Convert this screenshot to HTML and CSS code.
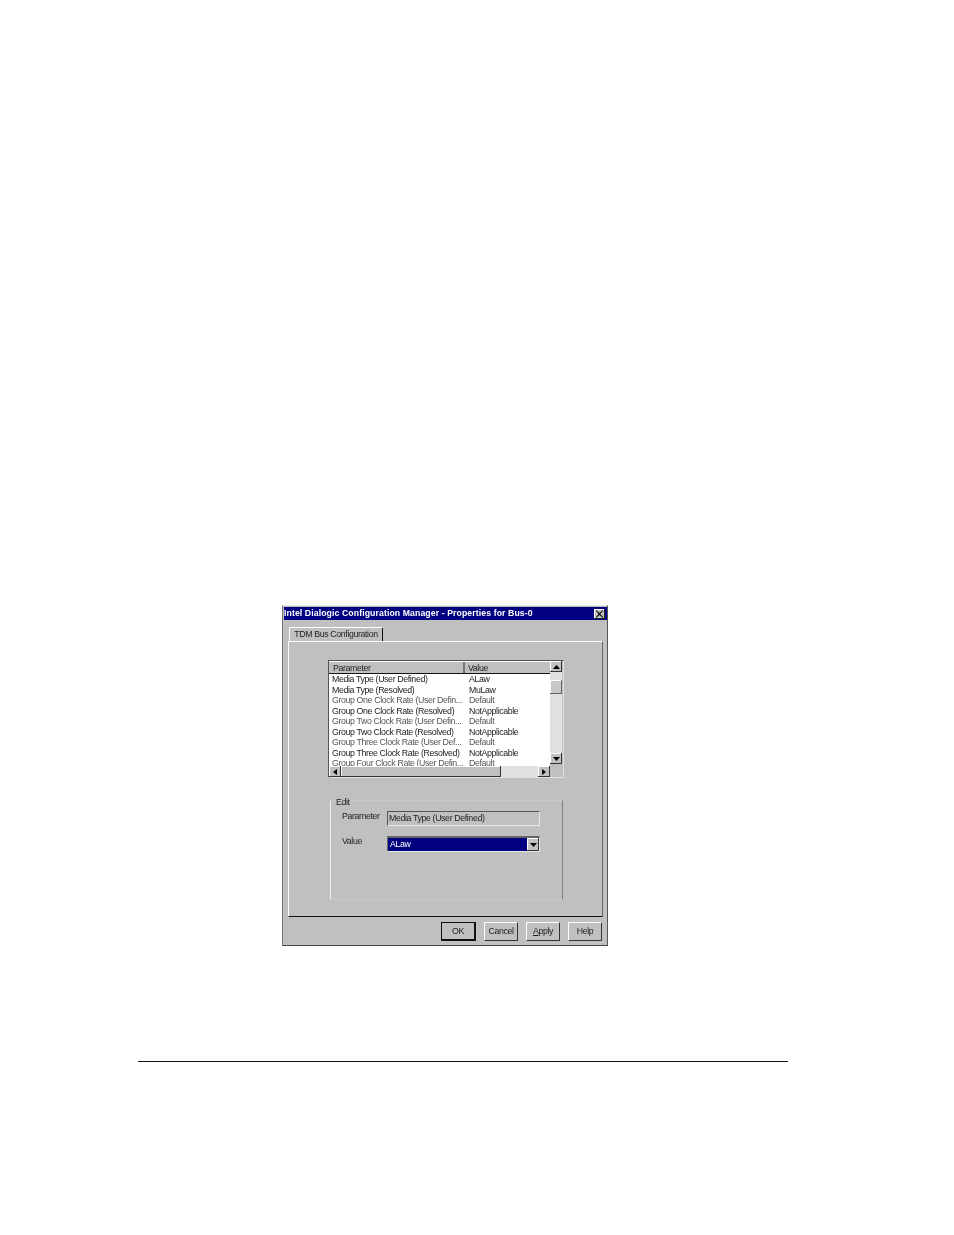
FILE: index.html
```html
<!DOCTYPE html>
<html>
<head>
<meta charset="UTF-8">
<title>Properties for Bus-0</title>
<link rel="stylesheet" href="styles.css">
</head>
<body>
<div class="dialog">
	<div class="titlebar">
		<span class="title">Intel Dialogic Configuration Manager - Properties for Bus-0</span>
		<span class="close">
			<svg width="9" height="8" viewBox="0 0 9 8"><path d="M1 0l3.500 3L8 0v1L5.200 4 8 7v1L4.500 5 1 8V7l2.800-3L1 1z" fill="#000"/></svg>
		</span>
	</div>
	<div class="tabstrip"><div class="tab">TDM Bus Configuration</div></div>
	<div class="panel">
		<div class="listbox">
			<div class="listmain">
				<div class="listhead">
					<div class="col1">Parameter</div>
					<div class="col2">Value</div>
				</div>
				<div class="rows">
					<div class="row"><span class="col1">Media Type (User Defined)</span><span class="col2">ALaw</span></div>
					<div class="row"><span class="col1">Media Type (Resolved)</span><span class="col2">MuLaw</span></div>
					<div class="row dim"><span class="col1">Group One Clock Rate (User Defin...</span><span class="col2">Default</span></div>
					<div class="row"><span class="col1">Group One Clock Rate (Resolved)</span><span class="col2">NotApplicable</span></div>
					<div class="row dim"><span class="col1">Group Two Clock Rate (User Defin...</span><span class="col2">Default</span></div>
					<div class="row"><span class="col1">Group Two Clock Rate (Resolved)</span><span class="col2">NotApplicable</span></div>
					<div class="row dim"><span class="col1">Group Three Clock Rate (User Def...</span><span class="col2">Default</span></div>
					<div class="row"><span class="col1">Group Three Clock Rate (Resolved)</span><span class="col2">NotApplicable</span></div>
					<div class="row dim"><span class="col1">Group Four Clock Rate (User Defin...</span><span class="col2">Default</span></div>
				</div>
				<div class="hscroll">
					<div class="sbtn"><svg width="4" height="6" viewBox="0 0 4 6"><path d="M4 0v6L0 3z"/></svg></div>
					<div class="hthumb"></div>
					<div class="htrack"></div>
					<div class="sbtn"><svg width="4" height="6" viewBox="0 0 4 6"><path d="M0 0v6l4-3z"/></svg></div>
				</div>
			</div>
			<div class="vscroll">
				<div class="sbtn tall"><svg width="7" height="4" viewBox="0 0 7 4"><path d="M3.500 0L7 4H0z"/></svg></div>
				<div class="vgap"></div>
				<div class="vthumb"></div>
				<div class="vtrack"></div>
				<div class="sbtn tall"><svg width="7" height="4" viewBox="0 0 7 4"><path d="M0 0h7L3.500 4z"/></svg></div>
			</div>
		</div>
		<div class="group">
			<div class="legend">Edit</div>
			<div class="field-row first">
				<label class="field-label">Parameter</label>
				<div class="readonly">Media Type (User Defined)</div>
			</div>
			<div class="field-row">
				<label class="field-label">Value</label>
				<div class="combo">
					<div class="combo-value">ALaw</div>
					<div class="sbtn combo-btn"><svg width="7" height="4" viewBox="0 0 7 4"><path d="M0 0h7L3.500 4z"/></svg></div>
				</div>
			</div>
		</div>
	</div>
	<div class="buttons">
		<div class="btn default">OK</div>
		<div class="btn">Cancel</div>
		<div class="btn"><u>A</u>pply</div>
		<div class="btn">Help</div>
	</div>
</div>
<div class="rule"></div>
</body>
</html>
```

FILE: styles.css
```css
html, body {
	margin: 0;
	background: #fff;
}
body {
	height: 1235px;
	overflow: hidden;
	font-family: "Liberation Sans", Arial, sans-serif;
	font-size: 8.800px;
	letter-spacing: -0.380px;
	color: #222;
}
.dialog {
	width: 323px;
	height: 338px;
	margin: 605px 0 0 282px;
	padding: 1px 0 0 1px;
	box-sizing: content-box;
	background: #c0c0c0;
	border-top: 1px solid #e8e8e8;
	border-left: 1px solid #777;
	border-right: 1px solid #555;
	border-bottom: 1px solid #444;
	filter: blur(0.35px);
}
.titlebar {
	height: 13px;
	background: #000080;
	color: #fff;
	font-weight: bold;
	display: flex;
	align-items: center;
	justify-content: space-between;
}
.title {
	font-size: 8.700px;
	letter-spacing: 0.100px;
	white-space: nowrap;
	line-height: 11px;
	margin-bottom: 1px;
}
.close {
	width: 11px;
	height: 10px;
	margin-right: 2px;
	background: #c0c0c0;
	display: flex;
	align-items: center;
	justify-content: center;
	box-shadow: inset -1px -1px 0 #222, inset 1px 1px 0 #fff;
}
.tabstrip {
	height: 21px;
	padding: 7px 0 0 5px;
	box-sizing: border-box;
	display: flex;
}
.tab {
	width: 94px;
	height: 14px;
	text-align: center;
	line-height: 12px;
	white-space: nowrap;
	border-top: 1px solid #fff;
	border-left: 1px solid #fff;
	border-right: 1px solid #111;
	box-sizing: border-box;
	border-radius: 2px 2px 0 0;
}
.panel {
	width: 315px;
	height: 276px;
	margin-left: 4px;
	box-sizing: border-box;
	border-top: 1px solid #fff;
	border-left: 1px solid #fff;
	border-right: 1px solid #666;
	border-bottom: 1px solid #111;
	padding: 18px 0 0 39px;
}
.listbox {
	width: 236px;
	height: 118px;
	box-sizing: border-box;
	display: flex;
	border-top: 1px solid #555;
	border-left: 1px solid #555;
	border-right: 1px solid #e0e0e0;
	border-bottom: 1px solid #e0e0e0;
}
.listmain {
	width: 221px;
	display: flex;
	flex-direction: column;
}
.listhead {
	height: 12px;
	display: flex;
	background: #c0c0c0;
	border-top: 1px solid #fff;
	box-sizing: border-box;
	flex: none;
	height: 13px;
	border-bottom: 1px solid #111;
	line-height: 12px;
}
.listhead .col1 {
	width: 136px;
	padding-left: 4px;
	box-sizing: border-box;
	border-right: 2px solid #777;
}
.listhead .col2 {
	padding-left: 3px;
}
.rows {
	height: 92px;
	overflow: hidden;
	background: #fff;
}
.row {
	height: 10.500px;
	line-height: 11px;
	display: flex;
	white-space: nowrap;
}
.row .col1 {
	width: 140px;
	padding-left: 3px;
	box-sizing: border-box;
}
.row.dim {
	color: #555;
}
.hscroll {
	height: 11px;
	display: flex;
	background: #c0c0c0;
}
.sbtn {
	background: #c0c0c0;
	width: 12px;
	height: 11px;
	box-sizing: border-box;
	display: flex;
	align-items: center;
	justify-content: center;
	box-shadow: inset -1px -1px 0 #333, inset 1px 1px 0 #fff;
}
.hthumb {
	width: 160px;
	box-sizing: border-box;
	box-shadow: inset -1px -1px 0 #333, inset 1px 1px 0 #fff;
}
.htrack {
	width: 37px;
	background: #e0e0e0;
}
.vscroll {
	width: 13px;
	display: flex;
	flex-direction: column;
	background: #c0c0c0;
}
.tall {
	flex: none;
	height: 11px;
}
.vgap {
	height: 8px;
	background: #e0e0e0;
	width: 12px;
}
.vthumb {
	height: 14px;
	width: 12px;
	background: #c8c8c8;
	box-shadow: inset -1px -1px 0 #666, inset 1px 1px 0 #fff;
}
.vtrack {
	height: 59px;
	width: 12px;
	background: #e0e0e0;
}
.group {
	width: 233px;
	height: 100px;
	margin: 22px 0 0 2px;
	box-sizing: border-box;
	border-top: 1px solid #c8c8c8;
	border-bottom: 1px solid #c8c8c8;
	border-left: 1px solid #f0f0f0;
	border-right: 1px solid #808080;
	padding-left: 5px;
}
.legend {
	height: 10px;
	line-height: 12px;
	margin-top: -5px;
}
.field-row {
	display: flex;
	margin-left: 6px;
	margin-top: 10px;
}
.field-row.first {
	margin-top: 5px;
}
.field-label {
	width: 45px;
	line-height: 10px;
}
.readonly {
	width: 153px;
	height: 15px;
	box-sizing: border-box;
	border-top: 1px solid #555;
	border-left: 1px solid #555;
	border-right: 1px solid #e8e8e8;
	border-bottom: 1px solid #e8e8e8;
	line-height: 13px;
	padding-left: 1px;
}
.combo {
	width: 153px;
	height: 16px;
	box-sizing: border-box;
	border-top: 2px solid #666;
	border-left: 1px solid #666;
	border-right: 1px solid #e8e8e8;
	border-bottom: 1px solid #e8e8e8;
	display: flex;
}
.combo-value {
	flex: 1;
	background: #000080;
	color: #fff;
	line-height: 13px;
	padding-left: 2px;
}
.combo-btn {
	width: 12px;
	height: 13px;
}
.buttons {
	display: flex;
	justify-content: flex-end;
	gap: 8px;
	margin: 5px 5px 0 0;
}
.btn {
	width: 34px;
	height: 19px;
	box-sizing: border-box;
	text-align: center;
	line-height: 17px;
	border-top: 1px solid #fff;
	border-left: 1px solid #fff;
	border-right: 1px solid #333;
	border-bottom: 1px solid #333;
}
.btn.default {
	width: 35px;
	border: 1px solid #111;
	border-right-width: 2px;
	border-bottom-width: 2px;
}
.rule {
	width: 650px;
	height: 1px;
	margin: 115px 0 0 138px;
	background: #111;
}
```
